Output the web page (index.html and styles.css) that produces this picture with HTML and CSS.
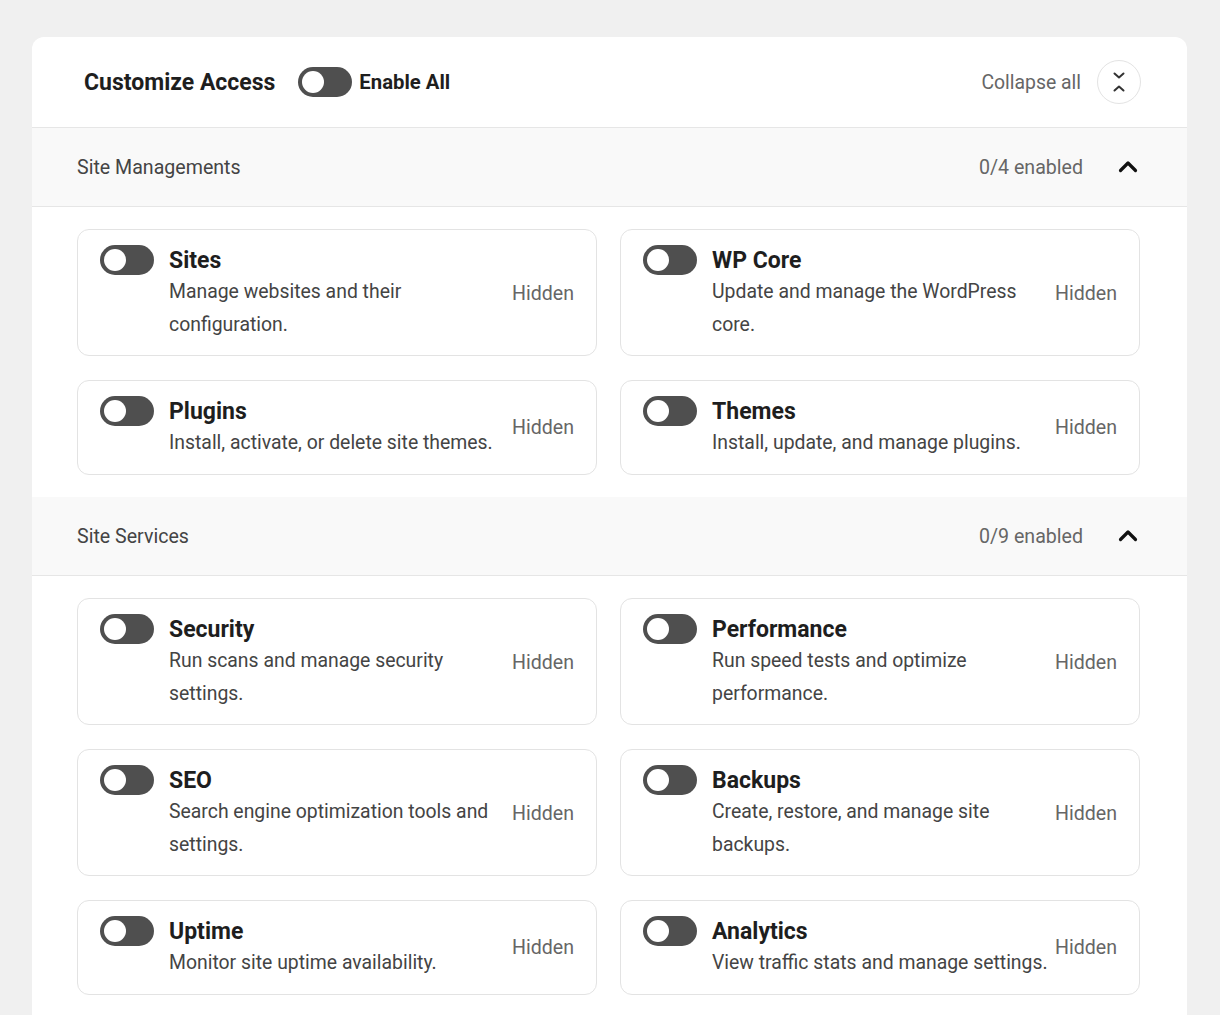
FILE: index.html
```html
<!DOCTYPE html>
<html lang="en">
<head>
<meta charset="utf-8">
<title>Customize Access</title>
<link rel="stylesheet" href="styles.css">
</head>
<body>
<div class="panel">
  <header class="panel-head">
    <div class="head-left">
      <h1 class="panel-title">Customize Access</h1>
      <label class="enable-all"><span class="toggle"><span class="knob"></span></span>Enable All</label>
    </div>
    <div class="head-right">
      <span class="collapse-label">Collapse all</span>
      <button class="collapse-btn" aria-label="Collapse all">
        <svg width="14" height="24" viewBox="0 0 14 24" fill="none" stroke="#333" stroke-width="2" stroke-linecap="round" stroke-linejoin="round"><path d="M2.5 3.5 L7 7.5 L11.5 3.5"/><path d="M2.5 20.5 L7 16.5 L11.5 20.5"/></svg>
      </button>
    </div>
  </header>

  <section class="group">
    <div class="group-head">
      <span class="group-title">Site Managements</span>
      <div class="group-meta">
        <span class="count">0/4 enabled</span>
        <svg class="chev" width="24" height="24" viewBox="0 0 24 24" fill="none" stroke="#111" stroke-width="3.2" stroke-linecap="round" stroke-linejoin="round"><path d="M4.5 15.5 L12 8 L19.5 15.5"/></svg>
      </div>
    </div>
    <div class="grid">
      <div class="item"><span class="toggle"><span class="knob"></span></span><div class="item-text"><div class="item-title">Sites</div><div class="item-desc">Manage websites and their configuration.</div></div><span class="state">Hidden</span></div>
      <div class="item"><span class="toggle"><span class="knob"></span></span><div class="item-text"><div class="item-title">WP Core</div><div class="item-desc">Update and manage the WordPress core.</div></div><span class="state">Hidden</span></div>
      <div class="item"><span class="toggle"><span class="knob"></span></span><div class="item-text"><div class="item-title">Plugins</div><div class="item-desc">Install, activate, or delete site themes.</div></div><span class="state">Hidden</span></div>
      <div class="item"><span class="toggle"><span class="knob"></span></span><div class="item-text"><div class="item-title">Themes</div><div class="item-desc">Install, update, and manage plugins.</div></div><span class="state">Hidden</span></div>
    </div>
  </section>

  <section class="group">
    <div class="group-head">
      <span class="group-title">Site Services</span>
      <div class="group-meta">
        <span class="count">0/9 enabled</span>
        <svg class="chev" width="24" height="24" viewBox="0 0 24 24" fill="none" stroke="#111" stroke-width="3.2" stroke-linecap="round" stroke-linejoin="round"><path d="M4.5 15.5 L12 8 L19.5 15.5"/></svg>
      </div>
    </div>
    <div class="grid">
      <div class="item"><span class="toggle"><span class="knob"></span></span><div class="item-text"><div class="item-title">Security</div><div class="item-desc">Run scans and manage security settings.</div></div><span class="state">Hidden</span></div>
      <div class="item"><span class="toggle"><span class="knob"></span></span><div class="item-text"><div class="item-title">Performance</div><div class="item-desc">Run speed tests and optimize performance.</div></div><span class="state">Hidden</span></div>
      <div class="item"><span class="toggle"><span class="knob"></span></span><div class="item-text"><div class="item-title">SEO</div><div class="item-desc">Search engine optimization tools and settings.</div></div><span class="state">Hidden</span></div>
      <div class="item"><span class="toggle"><span class="knob"></span></span><div class="item-text"><div class="item-title">Backups</div><div class="item-desc">Create, restore, and manage site backups.</div></div><span class="state">Hidden</span></div>
      <div class="item"><span class="toggle"><span class="knob"></span></span><div class="item-text"><div class="item-title">Uptime</div><div class="item-desc">Monitor site uptime availability.</div></div><span class="state">Hidden</span></div>
      <div class="item"><span class="toggle"><span class="knob"></span></span><div class="item-text"><div class="item-title">Analytics</div><div class="item-desc">View traffic stats and manage settings.</div></div><span class="state">Hidden</span></div>
    </div>
  </section>
</div>
</body>
</html>
```

FILE: styles.css
```css
* { box-sizing: border-box; }
html, body { margin: 0; padding: 0; }
body {
  background: #f0f0f0;
  font-family: Roboto, "Liberation Sans", Arial, sans-serif;
  color: #1e1e1e;
  padding: 37px 33px 0 32px;
}
.panel {
  background: #fff;
  border-radius: 12px 12px 0 0;
  overflow: hidden;
  min-height: 1000px;
}
.panel-head {
  height: 91px;
  display: flex;
  align-items: center;
  justify-content: space-between;
  padding: 0 46px 0 52px;
  border-bottom: 1px solid #e6e6e6;
}
.head-left { display: flex; align-items: center; gap: 23px; }
.panel-title { margin: 0; font-size: 23px; font-weight: 700; color: #1e1e1e; }
.enable-all {
  display: flex; align-items: center; gap: 7px;
  font-size: 20.3px; font-weight: 700; color: #1e1e1e;
}
.head-right { display: flex; align-items: center; gap: 16px; }
.collapse-label { font-size: 19.4px; color: #666; }
.collapse-btn {
  width: 44px; height: 44px; border-radius: 50%;
  border: 1px solid #e3e3e3; background: #fff;
  display: flex; align-items: center; justify-content: center;
  padding: 0;
}
.toggle {
  flex: none;
  width: 54px; height: 30px; border-radius: 15px;
  background: #4f4f4f;
  display: flex; align-items: center; padding-left: 4px;
}
.knob { width: 22px; height: 22px; border-radius: 50%; background: #fff; }
.group-head {
  height: 79px;
  background: #f9f9f9;
  border-bottom: 1px solid #e6e6e6;
  display: flex; align-items: center; justify-content: space-between;
  padding: 0 47px 0 45px;
}
.group-title { font-size: 19.6px; color: #444; }
.group-meta { display: flex; align-items: center; gap: 33px; }
.count { font-size: 19.6px; color: #666; }
.chev { display: block; }
.grid {
  display: grid;
  grid-template-columns: 1fr 1fr;
  gap: 24px 23px;
  padding: 22px 47px 22.5px 45px;
}
.item {
  border: 1px solid #e3e3e3;
  border-radius: 12px;
  display: flex; align-items: flex-start;
  padding: 15px 22px 14px;
  min-width: 0;
}
.item .toggle { margin-right: 15px; }
.item-text { flex: 1; min-width: 0; }
.item-title { font-size: 23px; font-weight: 700; line-height: 30px; color: #1e1e1e; padding-top: 1px; }
.item-desc { font-size: 19.4px; line-height: 32.5px; color: #444; }
.state { align-self: center; margin-left: 2px; font-size: 19.6px; color: #666; }
```
